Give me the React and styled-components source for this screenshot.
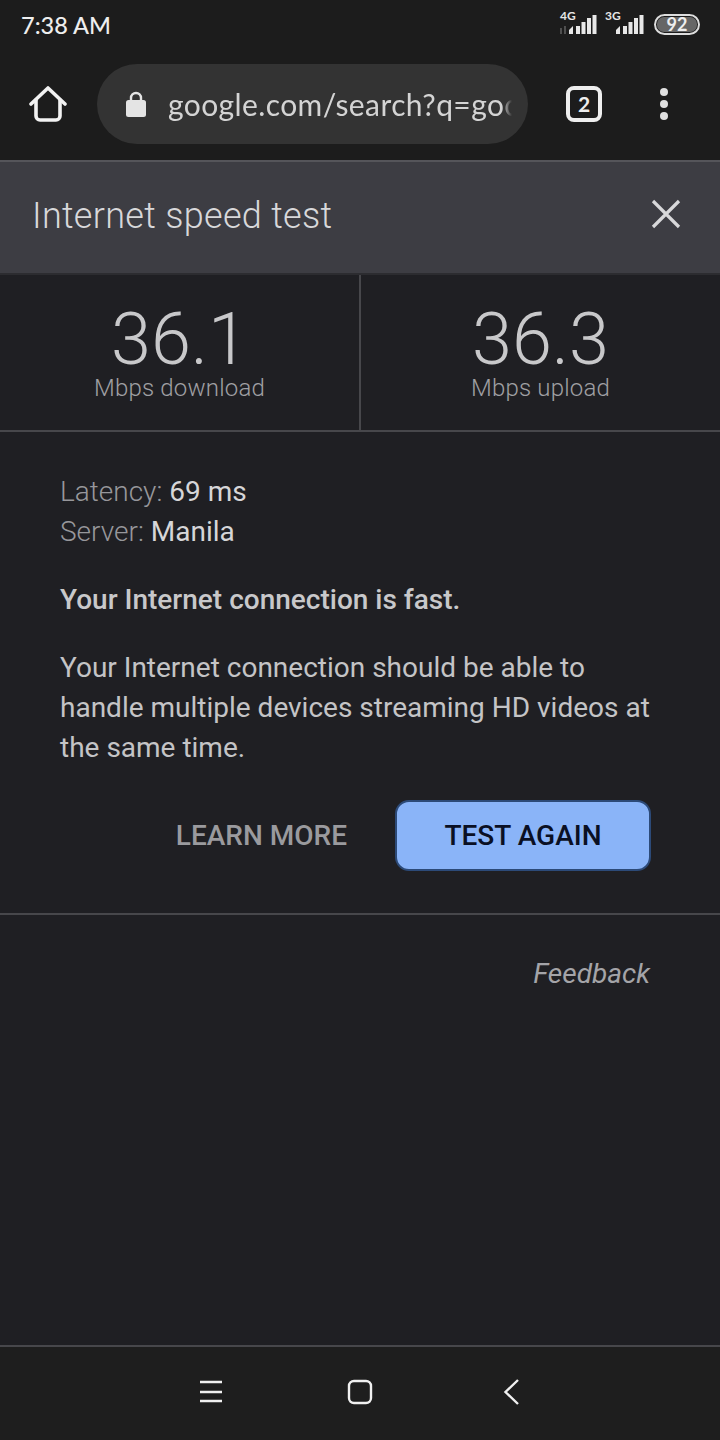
import styled, { createGlobalStyle } from 'styled-components'

const GlobalStyle = createGlobalStyle`
  html, body {
    margin: 0;
    padding: 0;
    background: #1f1f23;
  }
  * {
    box-sizing: border-box;
  }
`

const Page = styled.div`
  width: 720px;
  height: 1440px;
  display: flex;
  flex-direction: column;
  background: #1f1f23;
  font-family: Roboto, "Liberation Sans", sans-serif;
  overflow: hidden;
`

const StatusBar = styled.div`
  height: 52px;
  flex: none;
  padding: 10px 20px 0 21px;
  display: flex;
  justify-content: space-between;
  align-items: flex-start;
  background: #1c1c1c;
`

const Clock = styled.span`
  font-family: Lato, sans-serif;
  font-size: 23.5px;
  line-height: 30px;
  font-weight: 500;
  color: #eeeeee;
`

const StatusIcons = styled.div`
  display: flex;
  align-items: flex-start;
`

const SignalSvg = styled.svg`
  width: 40px;
  height: 26px;
  margin-left: ${(props) => props.$gap}px;
  flex: none;
  overflow: visible;
`

const Battery = styled.div`
  width: 46px;
  height: 21px;
  margin: 4px 0 0 9px;
  border: 2px solid #dddddd;
  border-radius: 11px;
  padding: 1px;
  display: flex;
`

const BatteryFill = styled.div`
  flex: 1;
  background: #666666;
  border-radius: 7px;
  color: #eeeeee;
  font-family: Lato, sans-serif;
  font-size: 18px;
  font-weight: 700;
  line-height: 15px;
  text-align: center;
`

const Toolbar = styled.div`
  height: 108px;
  flex: none;
  padding: 12px 0 0 29px;
  display: flex;
  align-items: flex-start;
  background: #1c1c1c;
`

const HomeButton = styled.svg`
  width: 38px;
  height: 38px;
  margin-top: 21px;
  flex: none;
`

const UrlPill = styled.div`
  width: 431px;
  height: 80px;
  margin-left: 30px;
  padding: 0 16px 0 29px;
  display: flex;
  align-items: center;
  border-radius: 40px;
  background: #333333;
  flex: none;
`

const UrlText = styled.span`
  margin-left: 22px;
  font-family: Lato, sans-serif;
  font-size: 30px;
  letter-spacing: 0.4px;
  color: #d4d4d4;
  white-space: nowrap;
  overflow: hidden;
  mask-image: linear-gradient(to right, #000 97%, transparent);
`

const TabCount = styled.div`
  width: 36px;
  height: 36px;
  margin: 22px 0 0 38px;
  border: 4px solid #eeeeee;
  border-radius: 8px;
  color: #eeeeee;
  font-family: Lato, sans-serif;
  font-size: 21px;
  font-weight: 700;
  line-height: 28px;
  text-align: center;
  flex: none;
`

const MenuDots = styled.div`
  margin: 24px 0 0 58px;
  display: flex;
  flex-direction: column;
  gap: 4px;

  span {
    width: 8px;
    height: 8px;
    border-radius: 50%;
    background: #e0e0e0;
  }
`

const Header = styled.div`
  height: 115px;
  flex: none;
  padding: 0 39px 4px 32px;
  display: flex;
  align-items: center;
  justify-content: space-between;
  background: #3d3d43;
  border-top: 2px solid #55555a;
  border-bottom: 2px solid #2c2c30;
`

const Title = styled.h1`
  margin: 0;
  font-size: 36px;
  letter-spacing: 0.3px;
  font-weight: 300;
  color: #d8d8da;
`

const CloseIcon = styled.svg`
  width: 30px;
  height: 30px;
  margin-bottom: 4px;
  stroke: #d8d8da;
  stroke-width: 3.2;
`

const Stats = styled.div`
  height: 157px;
  flex: none;
  display: grid;
  grid-template-columns: 359px 1fr;
  border-bottom: 2px solid #47474b;
`

const Stat = styled.div`
  padding-top: 30px;
  text-align: center;
  border-left: ${(props) => (props.$divided ? '2px solid #47474b' : 'none')};
`

const StatValue = styled.div`
  font-size: 72px;
  line-height: 69px;
  font-weight: 300;
  color: #c8c8ca;
`

const StatLabel = styled.div`
  font-size: 24px;
  line-height: 28px;
  letter-spacing: 0.2px;
  font-weight: 300;
  color: #a0a0a4;
`

const Body = styled.div`
  padding: 40px 60px 0;
  font-size: 28px;
  line-height: 40px;
  color: #c4c4c6;
`

const InfoLine = styled.div`
  color: #d6d6d8;
`

const InfoLabel = styled.span`
  font-weight: 300;
  color: #97979b;
`

const Verdict = styled.p`
  margin: 28px 0 0;
  font-weight: 500;
  color: #c8c8ca;
`

const Description = styled.p`
  margin: 28px 0 0;
`

const Actions = styled.div`
  margin-top: 32px;
  margin-right: 9px;
  padding-bottom: 42px;
  display: flex;
  justify-content: flex-end;
  align-items: center;
  gap: 48px;
`

const LearnMore = styled.span`
  font-size: 28px;
  font-weight: 500;
  color: #9a9a9e;
`

const TestAgain = styled.button`
  width: 256px;
  height: 71px;
  border: 2px solid #2c4a78;
  border-radius: 14px;
  background: #8ab4f8;
  color: #0a1024;
  font-family: inherit;
  font-size: 28px;
  font-weight: 500;
`

const FooterRow = styled.div`
  padding: 39px 70px 0 0;
  border-top: 2px solid #47474b;
  text-align: right;
  font-size: 28px;
  line-height: 40px;
  font-style: italic;
  color: #a4a4a8;
`

const Spacer = styled.div`
  flex: 1;
`

const NavBar = styled.div`
  height: 95px;
  flex: none;
  padding-bottom: 4px;
  display: grid;
  grid-template-columns: repeat(3, 149px);
  justify-content: center;
  justify-items: center;
  align-items: center;
  background: #1e1e1e;
  border-top: 2px solid #47474b;
`

const NavIcon = styled.svg`
  width: 26px;
  height: 26px;
  fill: none;
  stroke: #f0f0f0;
  stroke-width: 2.4;
`

function SignalIcon({ label, extra, gap }) {
  return (
    <SignalSvg $gap={gap} viewBox="0 0 40 26">
      <text x={extra ? 2 : 0} y="10" fontFamily="Lato, sans-serif" fontSize="12" fontWeight="700" fill="#e6e6e6">
        {label}
      </text>
      {extra && <path d="M3 18v6M7 16v8" stroke="#666" strokeWidth="1.4" />}
      <path d="M11 20l4-4v8h-4zM18 16h4v8h-4zM23.5 12h4v12h-4zM29 8h4v16h-4zM34.5 5h4v19h-4z" fill="#e8e8e8" />
    </SignalSvg>
  )
}

export default function App() {
  return (
    <Page>
      <GlobalStyle />

      <StatusBar>
        <Clock>7:38 AM</Clock>
        <StatusIcons>
          <SignalIcon label="4G" extra gap={0} />
          <SignalIcon label="3G" gap={7} />
          <Battery>
            <BatteryFill>92</BatteryFill>
          </Battery>
        </StatusIcons>
      </StatusBar>

      <Toolbar>
        <HomeButton viewBox="0 0 38 38" fill="none" stroke="#f2f2f2" strokeWidth="3.6" strokeLinejoin="round" strokeLinecap="round">
          <path d="M2 19 19 3l17 16" />
          <path d="M7 15v16a4 4 0 0 0 4 4h16a4 4 0 0 0 4-4V15" />
        </HomeButton>
        <UrlPill>
          <svg width="20" height="26" viewBox="0 0 20 26" style={{ flex: 'none' }}>
            <path d="M5 11V7a5 5 0 0 1 10 0v4" fill="none" stroke="#e4e4e4" strokeWidth="2.4" />
            <rect x="0" y="9" width="20" height="17" rx="2.5" fill="#e4e4e4" />
          </svg>
          <UrlText>google.com/search?q=goo</UrlText>
        </UrlPill>
        <TabCount>2</TabCount>
        <MenuDots>
          <span />
          <span />
          <span />
        </MenuDots>
      </Toolbar>

      <Header>
        <Title>Internet speed test</Title>
        <CloseIcon viewBox="0 0 30 30">
          <path d="M2 2l26 26M28 2 2 28" />
        </CloseIcon>
      </Header>

      <Stats>
        <Stat>
          <StatValue>36.1</StatValue>
          <StatLabel>Mbps download</StatLabel>
        </Stat>
        <Stat $divided>
          <StatValue>36.3</StatValue>
          <StatLabel>Mbps upload</StatLabel>
        </Stat>
      </Stats>

      <Body>
        <InfoLine><InfoLabel>Latency:</InfoLabel> 69 ms</InfoLine>
        <InfoLine><InfoLabel>Server:</InfoLabel> Manila</InfoLine>
        <Verdict>Your Internet connection is fast.</Verdict>
        <Description>
          Your Internet connection should be able to handle multiple devices streaming HD videos at the same time.
        </Description>
        <Actions>
          <LearnMore>LEARN MORE</LearnMore>
          <TestAgain>TEST AGAIN</TestAgain>
        </Actions>
      </Body>

      <FooterRow>Feedback</FooterRow>
      <Spacer />

      <NavBar>
        <NavIcon viewBox="0 0 26 26">
          <path d="M2 3h22M2 13h22M2 22h22" />
        </NavIcon>
        <NavIcon viewBox="0 0 26 26">
          <rect x="2" y="2" width="22" height="22" rx="5" />
        </NavIcon>
        <NavIcon viewBox="0 0 26 26">
          <path d="M22 1 9.5 13 22 25" />
        </NavIcon>
      </NavBar>
    </Page>
  )
}
